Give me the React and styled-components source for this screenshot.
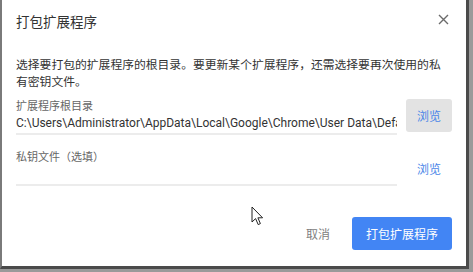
import React from "react";
import styled, { createGlobalStyle } from "styled-components";

const GlobalStyle = createGlobalStyle`
  html, body {
    margin: 0;
    padding: 0;
    background: #9a9a9a;
  }
  body {
    width: 473px;
    height: 272px;
    overflow: hidden;
    font-family: Roboto, "Noto Sans CJK SC", sans-serif;
  }
`;

function App() {
  return (
    <>
      <GlobalStyle />
      <Dialog>
        <Header>
          <Title>打包扩展程序</Title>
          <Close aria-label="关闭">
            <svg width="11" height="11" viewBox="0 0 11 11">
              <path d="M1 1L10 10M10 1L1 10" stroke="#6b6b6b" strokeWidth="1.4" />
            </svg>
          </Close>
        </Header>
        <Description>
          选择要打包的扩展程序的根目录。要更新某个扩展程序，还需选择要再次使用的私有密钥文件。
        </Description>
        <FieldRow>
          <Field>
            <Label>扩展程序根目录</Label>
            <Value>
              <ValueText>C:\Users\Administrator\AppData\Local\Google\Chrome\User Data\Default\Extensions</ValueText>
            </Value>
          </Field>
          <BrowseButton filled>浏览</BrowseButton>
        </FieldRow>
        <FieldRow second>
          <Field>
            <Label>私钥文件（选填）</Label>
            <Value />
          </Field>
          <BrowseButton>浏览</BrowseButton>
        </FieldRow>
        <Footer>
          <CancelButton>取消</CancelButton>
          <PrimaryButton>打包扩展程序</PrimaryButton>
        </Footer>
        <Cursor width="13" height="21" viewBox="0 0 13 21">
          <path
            d="M1 1L1 16L4.6 12.6L7.2 18.6L9.4 17.6L6.9 11.8L11.6 11.8Z"
            fill="#fff"
            stroke="#222"
            strokeWidth="1"
            strokeLinejoin="round"
          />
        </Cursor>
      </Dialog>
    </>
  );
}

export default App;

const Dialog = styled.div`
  position: relative;
  box-sizing: border-box;
  width: 469px;
  height: 269px;
  background: #fff;
  border-left: 2px solid #7a7a7a;
  border-right: 3px solid #4a4a4a;
  border-bottom: 3px solid #4a4a4a;
  padding: 0 0 0 14px;
  display: flex;
  flex-direction: column;
`;

const Header = styled.div`
  display: flex;
  align-items: center;
  justify-content: space-between;
  height: 38px;
  padding-right: 17px;
`;

const Title = styled.div`
  font-size: 13.5px;
  color: #333;
  margin-top: 3px;
`;

const Close = styled.div`
  display: flex;
  align-items: center;
`;

const Description = styled.div`
  margin-top: 19px;
  width: 432px;
  font-size: 11.8px;
  line-height: 17px;
  color: #333;
`;

const FieldRow = styled.div`
  display: flex;
  align-items: ${(p) => (p.second ? "center" : "flex-start")};
  margin-top: ${(p) => (p.second ? "15px" : "8px")};
  padding-right: 14px;
  gap: 9px;
`;

const Field = styled.div`
  width: 381px;
  display: flex;
  flex-direction: column;
`;

const Label = styled.div`
  font-size: 11px;
  line-height: 15px;
  color: #666;
`;

const Value = styled.div`
  height: 18px;
  font-size: 12px;
  line-height: 18px;
  color: #333;
  overflow: hidden;
  border-bottom: 2px solid #ececec;
  padding-bottom: 1px;
`;

const ValueText = styled.div`
  width: 381px;
  white-space: nowrap;
  overflow: hidden;
  text-overflow: clip;
`;

const BrowseButton = styled.div`
  width: 46px;
  height: 33px;
  border-radius: 3px;
  background: ${(p) => (p.filled ? "#e3e3e3" : "transparent")};
  color: #4a86e8;
  font-size: 12px;
  display: flex;
  align-items: center;
  justify-content: center;
`;

const Footer = styled.div`
  display: flex;
  justify-content: flex-end;
  align-items: center;
  gap: 22px;
  margin-top: 31px;
  padding-right: 14px;
`;

const CancelButton = styled.div`
  font-size: 12px;
  color: #808080;
`;

const PrimaryButton = styled.div`
  width: 100px;
  height: 33px;
  border-radius: 3px;
  background: #4285f4;
  color: #fff;
  font-size: 12px;
  display: flex;
  align-items: center;
  justify-content: center;
`;

const Cursor = styled.svg`
  position: absolute;
  left: 249px;
  top: 206px;
`;
